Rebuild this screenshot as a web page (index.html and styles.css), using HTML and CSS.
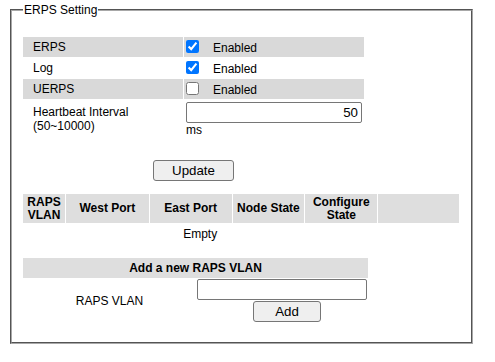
FILE: index.html
```html
<!DOCTYPE html>
<html lang="en">
<head>
  <meta charset="UTF-8">
  <title>ERPS Setting</title>
  <link rel="stylesheet" href="styles.css">
</head>
<body>
  <fieldset class="panel">
    <legend>ERPS Setting</legend>

    <table class="settings">
      <tr class="shade">
        <td class="label">ERPS</td>
        <td><input type="checkbox" checked><span class="opt">Enabled</span></td>
      </tr>
      <tr>
        <td class="label">Log</td>
        <td><input type="checkbox" checked><span class="opt">Enabled</span></td>
      </tr>
      <tr class="shade">
        <td class="label">UERPS</td>
        <td><input type="checkbox"><span class="opt">Enabled</span></td>
      </tr>
      <tr class="tall">
        <td class="label">Heartbeat Interval<br>(50~10000)</td>
        <td>
          <input type="text" class="field num" value="50">
          <div class="unit">ms</div>
        </td>
      </tr>
    </table>

    <div class="actions">
      <button class="btn update">Update</button>
    </div>

    <table class="list">
      <tr>
        <th class="c1">RAPS<br>VLAN</th>
        <th class="c2">West Port</th>
        <th class="c3">East Port</th>
        <th class="c4">Node State</th>
        <th class="c5">Configure<br>State</th>
        <th class="c6"></th>
      </tr>
      <tr>
        <td colspan="5" class="empty">Empty</td>
      </tr>
    </table>

    <table class="add">
      <tr>
        <th colspan="2">Add a new RAPS VLAN</th>
      </tr>
      <tr>
        <td class="name">RAPS VLAN</td>
        <td class="entry">
          <input type="text" class="field vlan">
          <button class="btn add-btn">Add</button>
        </td>
      </tr>
    </table>
  </fieldset>
</body>
</html>
```

FILE: styles.css
```css
body {
  margin: 0;
  font-family: "Liberation Sans", Arial, sans-serif;
  font-size: 12px;
  color: #000;
  background: #fff;
}
.panel {
  box-sizing: border-box;
  width: 463px;
  height: 341px;
  margin: 3px 0 0 10px;
  padding: 0 11px;
  border: 2px groove #a8a8a8;
}
.panel legend {
  padding: 0 1px;
  line-height: 14px;
}
table {
  border-spacing: 1px;
  margin-left: -1px;
}
td, th {
  padding: 0;
}
.settings {
  margin-top: 19px;
}
.settings tr {
  height: 20px;
}
.settings .shade td {
  background: #d9d9d9;
}
.settings .label {
  width: 150px;
  padding-left: 10px;
}
.settings td + td {
  width: 180px;
}
.settings input[type="checkbox"] {
  width: 13px;
  height: 13px;
  margin: 0 0 0 2px;
  vertical-align: -2px;
}
.opt {
  margin-left: 14px;
  vertical-align: -1px;
}
.settings .tall {
  height: 37px;
}
.field {
  box-sizing: border-box;
  height: 21px;
  padding: 1px 3px;
  border: 1px solid #767676;
  border-radius: 2px;
  font-family: "Liberation Sans", Arial, sans-serif;
  font-size: 13.3px;
  background: #fff;
}
.num {
  display: block;
  width: 176px;
  margin: 1px 0 0 2px;
  text-align: right;
}
.unit {
  margin-left: 2px;
  line-height: 14px;
}
.actions {
  width: 341px;
  margin-top: 22px;
  text-align: center;
}
.btn {
  box-sizing: border-box;
  height: 21px;
  padding: 0;
  border: 1px solid #767676;
  border-radius: 3px;
  background: #efefef;
  font-family: "Liberation Sans", Arial, sans-serif;
  font-size: 13.3px;
  color: #000;
}
.update {
  width: 81px;
}
.list {
  margin-top: 12px;
}
.list th {
  height: 29px;
  background: #dedede;
  font-weight: bold;
  line-height: 13px;
  text-align: center;
}
.c1 { width: 42px; }
.c2 { width: 83px; }
.c3 { width: 82px; }
.c4 { width: 72px; }
.c5 { width: 72px; }
.c6 { width: 81px; }
.empty {
  padding: 3px 0;
  text-align: center;
  line-height: 14px;
}
.add {
  margin-top: 12px;
}
.add th {
  height: 20px;
  background: #dedede;
  font-weight: bold;
  text-align: center;
}
.add .name {
  width: 173px;
  text-align: center;
}
.add .entry {
  width: 171px;
}
.vlan {
  display: block;
  width: 170px;
  margin-top: 0;
}
.add-btn {
  display: block;
  width: 68px;
  margin: 1px 0 0 56px;
}
```
